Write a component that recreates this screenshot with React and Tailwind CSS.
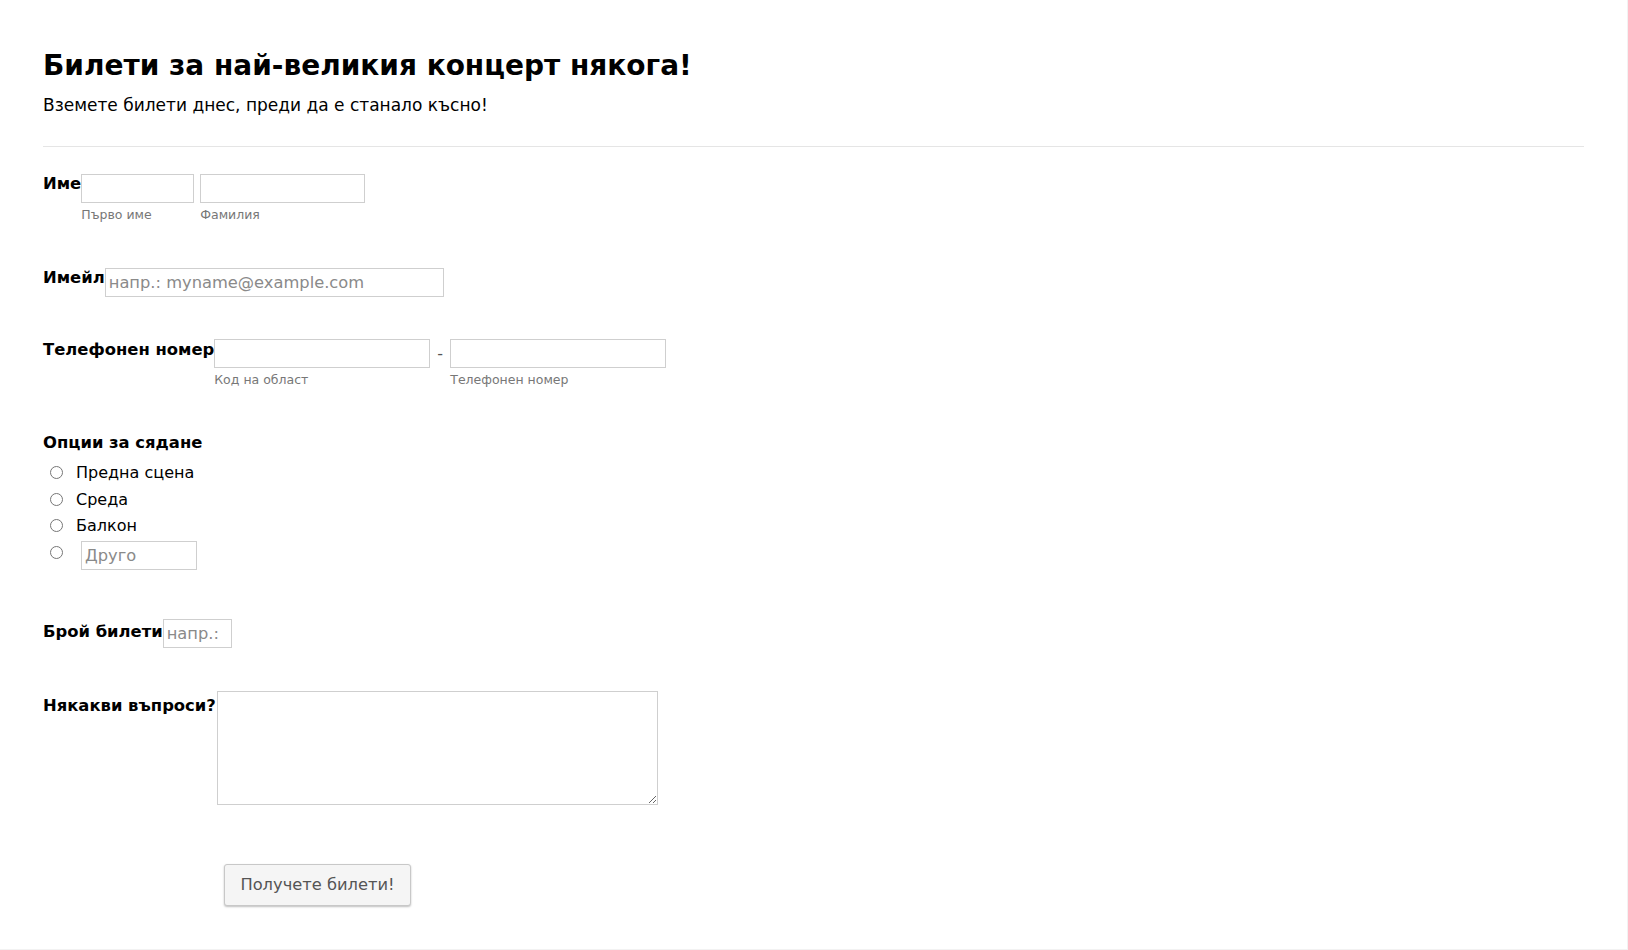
import React from 'react';

const inputCls =
  'h-[29px] border border-[#cfcfcf] bg-white px-[3px] text-[16.3px] text-black outline-none placeholder:text-[#8a8a8a]';

function SubLabel({ children }) {
  return <div className="mt-[5px] text-[12.5px] leading-[14px] text-[#777]">{children}</div>;
}

function Label({ children, className = '' }) {
  return <label className={`text-[16.4px] font-bold leading-[19px] whitespace-nowrap ${className}`}>{children}</label>;
}

export default function App() {
  const seats = ['Предна сцена', 'Среда', 'Балкон'];

  return (
    <div className="box-border h-[950px] w-[1628px] border-r border-b border-[#f2f2f2] bg-white pl-[43px] pr-[43px] pt-[49px] font-['DejaVu_Sans',Verdana,sans-serif] text-black">
      <h1 className="text-[28px] font-bold leading-[33px]">Билети за най-великия концерт някога!</h1>
      <p className="mt-[14px] text-[17px] leading-[19px]">Вземете билети днес, преди да е станало късно!</p>
      <div className="mt-[31px] border-t border-[#e5e5e5]" />

      {/* name */}
      <div className="mt-[27px] flex items-start">
        <Label>Име</Label>
        <div>
          <input className={`${inputCls} h-[28px] w-[113px]`} />
          <SubLabel>Първо име</SubLabel>
        </div>
        <div className="ml-[6px]">
          <input className={`${inputCls} h-[28px] w-[165px]`} />
          <SubLabel>Фамилия</SubLabel>
        </div>
      </div>

      {/* email */}
      <div className="mt-[46px] flex items-start">
        <Label>Имейл</Label>
        <input className={`${inputCls} w-[339px]`} placeholder="напр.: myname@example.com" />
      </div>

      {/* phone */}
      <div className="mt-[42px] flex items-start">
        <Label className="pt-[1px]">Телефонен номер</Label>
        <div>
          <input className={`${inputCls} w-[216px]`} />
          <SubLabel>Код на област</SubLabel>
        </div>
        <div className="flex h-[29px] w-[20px] items-center justify-center text-[16px] text-[#555]">-</div>
        <div>
          <input className={`${inputCls} w-[216px]`} />
          <SubLabel>Телефонен номер</SubLabel>
        </div>
      </div>

      {/* seating */}
      <div className="mt-[44px]">
        <Label>Опции за сядане</Label>
        <div className="mt-[4px]">
          {seats.map((s) => (
            <div key={s} className="flex h-[26.7px] items-center">
              <input type="radio" name="seat" className="m-0 ml-[7px] h-[13px] w-[13px]" />
              <span className="ml-[13px] text-[16px] leading-[19px]">{s}</span>
            </div>
          ))}
          <div className="flex items-start">
            <input type="radio" name="seat" className="m-0 ml-[7px] mt-[7px] h-[13px] w-[13px]" />
            <input className={`${inputCls} ml-[18px] mt-[2px] h-[28px] w-[116px] px-[2px]`} placeholder="Друго" />
          </div>
        </div>
      </div>

      {/* count */}
      <div className="mt-[49px] flex items-start">
        <Label className="pt-[3px]">Брой билети</Label>
        <input className={`${inputCls} w-[69px] px-[1px]`} placeholder="напр.:" />
      </div>

      {/* questions */}
      <div className="mt-[43px] flex items-start">
        <Label className="pt-[5px]">Някакви въпроси?</Label>
        <textarea className="ml-[1px] h-[114px] w-[441px] border border-[#cfcfcf] bg-white p-[4px] text-[16px] outline-none" />
      </div>

      <button className="ml-[181px] mt-[59px] h-[42px] w-[187px] rounded-[3px] border border-[#c8c8c8] bg-[#f5f5f5] text-[16.3px] text-[#555] shadow-[0_1px_2px_rgba(0,0,0,0.25)]">
        Получете билети!
      </button>
    </div>
  );
}
